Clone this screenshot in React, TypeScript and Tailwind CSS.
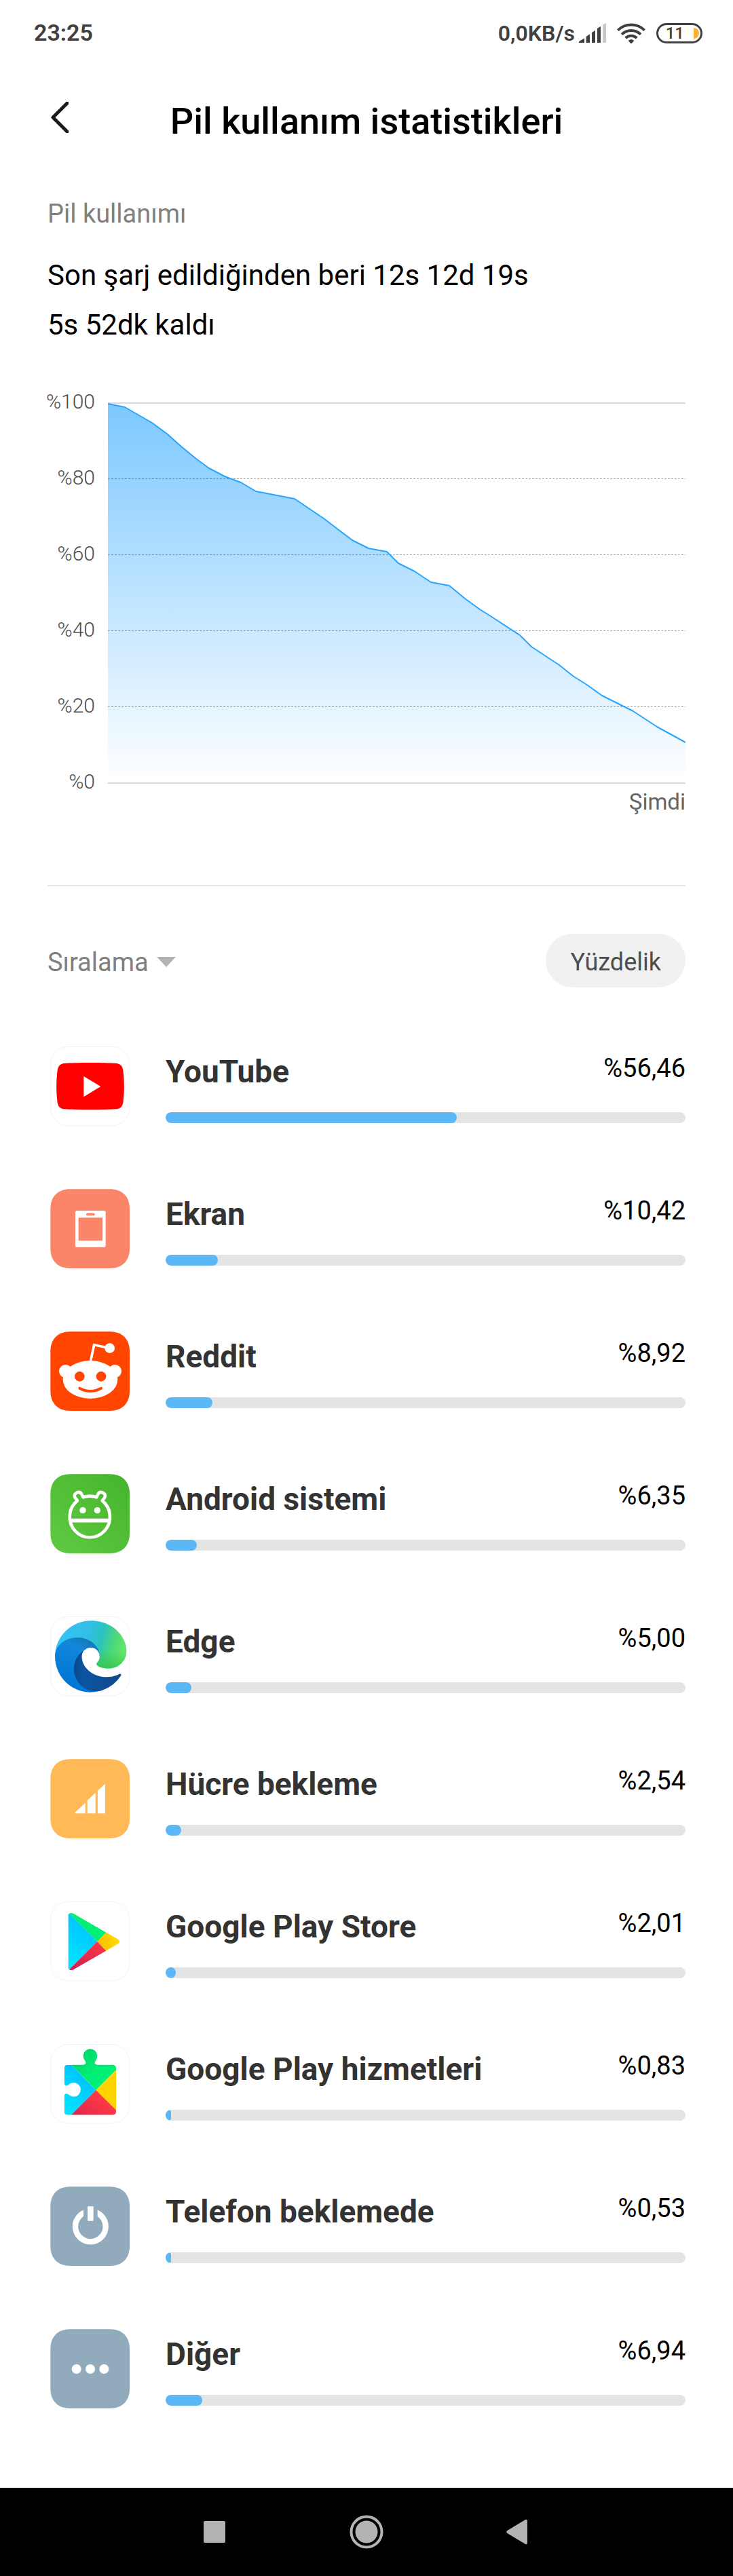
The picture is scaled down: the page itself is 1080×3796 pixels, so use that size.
import type { ReactNode } from "react";

type App = {
  name: string;
  value: string;
  percent: number;
  icon: ReactNode;
};

const SQUIRCLE =
  "M88 1H264C318 1 351 34 351 88V264C351 318 318 351 264 351H88C34 351 1 318 1 264V88C1 34 34 1 88 1Z";

/** Rounded app tile. White tiles get a hairline border. */
function Tile({ fill = "#fff", children }: { fill?: string; children: ReactNode }) {
  return (
    <svg viewBox="0 0 354 354" className="h-[118px] w-[118px] shrink-0" aria-hidden="true">
      <path
        d={SQUIRCLE}
        fill={fill}
        stroke={fill === "#fff" ? "#ebebeb" : "none"}
        strokeWidth={fill === "#fff" ? 2 : 0}
      />
      {children}
    </svg>
  );
}

function YouTubeIcon() {
  return (
    <Tile>
      <path
        fill="#f00"
        d="M60 75C120 71 234 71 294 75C312 78 319 88 322 106C328 150 328 204 322 248C319 264 312 274 294 277C234 281 120 281 60 277C42 274 35 264 32 248C26 204 26 150 32 106C35 88 42 78 60 75Z"
      />
      <path fill="#fff" d="M148 132L223 177L148 223Z" />
    </Tile>
  );
}

function ScreenIcon() {
  return (
    <Tile fill="#fb8568">
      <rect x="111" y="96" width="134" height="162" rx="7" fill="#fff" />
      <rect x="159" y="107" width="38" height="11" rx="5" fill="#fb8568" />
      <rect x="125" y="127" width="106" height="102" fill="#fb8568" />
    </Tile>
  );
}

function RedditIcon() {
  return (
    <Tile fill="#ff4500">
      <g fill="#fff">
        <circle cx="68" cy="176" r="29" />
        <circle cx="286" cy="176" r="29" />
        <ellipse cx="177" cy="213" rx="121" ry="84" />
        <circle cx="263" cy="74" r="22" />
      </g>
      <path d="M178 134L194 59L252 72" fill="none" stroke="#fff" strokeWidth="11" strokeLinejoin="round" />
      <g fill="#ff4500">
        <circle cx="130" cy="199" r="22" />
        <circle cx="225" cy="199" r="22" />
      </g>
      <path d="M130 251Q177 277 225 251" fill="none" stroke="#ff4500" strokeWidth="12" strokeLinecap="round" />
    </Tile>
  );
}

function AndroidIcon() {
  return (
    <Tile fill="url(#android-bg)">
      <defs>
        <linearGradient id="android-bg" x1="0" y1="1" x2="1" y2="0">
          <stop offset="0" stopColor="#60ca42" />
          <stop offset="1" stopColor="#45b42c" />
        </linearGradient>
      </defs>
      <path
        d="M146 103A90 90 0 0 1 204 103L211 90C215 81 223 79 232 83C241 87 246 94 241 104L230 118A89 91 0 1 1 120 118L109 104C104 94 109 87 118 83C127 79 135 81 139 90L146 103Z"
        fill="none"
        stroke="#fff"
        strokeWidth="14"
        strokeLinejoin="round"
      />
      <path d="M92 206H258" stroke="#fff" strokeWidth="17" />
      <circle cx="144" cy="161" r="14" fill="#fff" />
      <circle cx="208" cy="161" r="14" fill="#fff" />
    </Tile>
  );
}

function EdgeIcon() {
  return (
    <Tile>
      <defs>
        <linearGradient id="edge-dark" gradientUnits="userSpaceOnUse" x1="63" y1="177" x2="241" y2="177">
          <stop offset="0" stopColor="#0a4486" />
          <stop offset="0.25" stopColor="#0c54a0" />
          <stop offset="1" stopColor="#124a8b" />
        </linearGradient>
        <linearGradient id="edge-blue" gradientUnits="userSpaceOnUse" x1="145" y1="70" x2="50" y2="230">
          <stop offset="0" stopColor="#1673ae" />
          <stop offset="0.3" stopColor="#1287dc" />
          <stop offset="1" stopColor="#0076d6" />
        </linearGradient>
        <linearGradient id="edge-green" gradientUnits="userSpaceOnUse" x1="40" y1="70" x2="240" y2="130">
          <stop offset="0" stopColor="#35c1f1" />
          <stop offset="0.35" stopColor="#31bfe6" />
          <stop offset="0.6" stopColor="#2bc3c0" />
          <stop offset="0.8" stopColor="#4ad67f" />
          <stop offset="1" stopColor="#60e56a" />
        </linearGradient>
        <linearGradient id="edge-shade" gradientUnits="userSpaceOnUse" x1="200" y1="110" x2="190" y2="176">
          <stop offset="0" stopColor="#36c752" stopOpacity="0" />
          <stop offset="1" stopColor="#36c752" />
        </linearGradient>
      </defs>
      <g transform="translate(21 19) scale(1.235) translate(-4.63 -4.92)">
        <path
          fill="url(#edge-dark)"
          d="M235.68 195.46a93.73 93.73 0 0 1-10.54 4.71 101.87 101.87 0 0 1-35.9 6.46c-47.32 0-88.54-32.55-88.54-74.32A31.48 31.48 0 0 1 117.13 105c-42.8 1.8-53.8 46.4-53.8 72.53 0 73.88 68.09 81.37 82.76 81.37 7.91 0 19.84-2.3 27-4.56l1.31-.44a128.34 128.34 0 0 0 66.6-52.8 4 4 0 0 0-5.32-5.64Z"
        />
        <path
          fill="url(#edge-blue)"
          d="M110.34 246.34A79.2 79.2 0 0 1 87.6 225a80.72 80.72 0 0 1 29.53-120c3.12-1.47 8.45-4.13 15.54-4a32.35 32.35 0 0 1 25.69 13 31.88 31.88 0 0 1 6.36 18.66c0-.21 24.46-79.6-80-79.6-43.9 0-80 41.66-80 78.21a130.15 130.15 0 0 0 12.11 56 128 128 0 0 0 156.38 67.11 75.55 75.55 0 0 1-62.78-8Z"
        />
        <path
          fill="url(#edge-green)"
          d="M156.94 153.78c-.81 1.05-3.3 2.5-3.3 5.66 0 2.61 1.7 5.12 4.72 7.23 14.38 10 41.49 8.68 41.56 8.68a59.56 59.56 0 0 0 30.27-8.35 61.38 61.38 0 0 0 30.43-52.88c.26-22.41-8-37.31-11.34-43.91C228.09 28.76 182.35 4.92 132.61 4.92a128 128 0 0 0-128 126.2c.48-36.54 36.8-66.05 80-66.05 3.5 0 23.46.34 42 10.07 16.34 8.58 24.9 18.94 30.85 29.21 6.18 10.67 7.28 24.15 7.28 29.52 0 5.37-2.74 13.33-7.8 19.91Z"
        />
        <path
          fill="url(#edge-shade)"
          d="M156.94 153.78c-.81 1.05-3.3 2.5-3.3 5.66 0 2.61 1.7 5.12 4.72 7.23 14.38 10 41.49 8.68 41.56 8.68a59.56 59.56 0 0 0 30.27-8.35 61.38 61.38 0 0 0 30.43-52.88L164 110c1 8 .7 18 .7 23.87 0 5.37-2.74 13.33-7.8 19.91Z"
        />
      </g>
    </Tile>
  );
}

function CellIcon() {
  return (
    <Tile fill="#ffb957">
      <g fill="#fff">
        <path d="M109 237L155 194V241H112Q109 241 109 237Z" />
        <path d="M164 183L200 150V241H164Z" />
        <path d="M210 140L243 110V241H210Z" />
      </g>
    </Tile>
  );
}

function PlayStoreIcon() {
  return (
    <Tile>
      <defs>
        <linearGradient id="play-blue" x1="0.6" y1="0" x2="0.2" y2="1">
          <stop offset="0" stopColor="#00bfff" />
          <stop offset="1" stopColor="#00e5ff" />
        </linearGradient>
        <linearGradient id="play-red" x1="1" y1="0" x2="0" y2="1">
          <stop offset="0" stopColor="#ff3a44" />
          <stop offset="1" stopColor="#c8204f" />
        </linearGradient>
        <linearGradient id="play-yellow" x1="0" y1="0" x2="1" y2="0">
          <stop offset="0" stopColor="#ffbd00" />
          <stop offset="1" stopColor="#ffdd00" />
        </linearGradient>
      </defs>
      <path fill="url(#play-blue)" d="M84 53L208 177L84 301Q80 299 80 293V61Q80 55 84 53Z" />
      <path fill="#00f076" d="M84 54Q92 48 103 54L247 137L208 177Z" />
      <path fill="url(#play-yellow)" d="M247 137L300 167Q314 177 300 187L247 218L208 177Z" />
      <path fill="url(#play-red)" d="M208 177L247 218L103 301Q92 307 84 301Z" />
    </Tile>
  );
}

function PlayServicesIcon() {
  return (
    <Tile>
      <defs>
        <clipPath id="puzzle">
          <path d="M78 92H145Q158 91 157 82Q156 77 152 71A31 31 0 1 1 202 71Q198 77 197 82Q196 91 209 92H275Q291 92 291 108V298Q291 314 275 314H78Q62 314 62 298V229Q63 220 72 220Q79 221 84 226A31 31 0 1 0 84 178Q79 183 72 184Q63 183 62 174V108Q62 92 78 92Z" />
        </clipPath>
        <linearGradient id="puzzle-blue" x1="1" y1="0" x2="0.4" y2="1">
          <stop offset="0" stopColor="#00b8ff" />
          <stop offset="1" stopColor="#00e3ff" />
        </linearGradient>
        <linearGradient id="puzzle-green" x1="0" y1="0" x2="0.5" y2="0.6">
          <stop offset="0.3" stopColor="#04d568" />
          <stop offset="1" stopColor="#00f076" />
        </linearGradient>
        <linearGradient id="puzzle-red" x1="1" y1="0.3" x2="0" y2="1">
          <stop offset="0.2" stopColor="#ff3a44" />
          <stop offset="1" stopColor="#dc2450" />
        </linearGradient>
      </defs>
      <g clipPath="url(#puzzle)">
        <path fill="url(#puzzle-blue)" d="M40 92H94L202 204L92 314H40Z" />
        <path fill="url(#puzzle-green)" d="M94 92V10H291V115L202 204Z" />
        <path fill="#ffd400" d="M291 115V292L202 204Z" />
        <path fill="url(#puzzle-red)" d="M202 204L291 292V314H92Z" />
      </g>
    </Tile>
  );
}

function PowerIcon() {
  return (
    <Tile fill="#91abbd">
      <circle cx="178" cy="177" r="67" fill="none" stroke="#fff" strokeWidth="25" />
      <rect x="147" y="80" width="62" height="75" fill="#91abbd" />
      <rect x="165" y="88" width="26" height="64" rx="3" fill="#fff" />
    </Tile>
  );
}

function OtherIcon() {
  return (
    <Tile fill="#91abbd">
      <g fill="#fff">
        <circle cx="116" cy="177" r="21" />
        <circle cx="177" cy="177" r="21" />
        <circle cx="238" cy="177" r="21" />
      </g>
    </Tile>
  );
}

const APPS: App[] = [
  { name: "YouTube", value: "%56,46", percent: 56, icon: <YouTubeIcon /> },
  { name: "Ekran", value: "%10,42", percent: 10, icon: <ScreenIcon /> },
  { name: "Reddit", value: "%8,92", percent: 9, icon: <RedditIcon /> },
  { name: "Android sistemi", value: "%6,35", percent: 6, icon: <AndroidIcon /> },
  { name: "Edge", value: "%5,00", percent: 5, icon: <EdgeIcon /> },
  { name: "Hücre bekleme", value: "%2,54", percent: 3, icon: <CellIcon /> },
  { name: "Google Play Store", value: "%2,01", percent: 2, icon: <PlayStoreIcon /> },
  { name: "Google Play hizmetleri", value: "%0,83", percent: 1, icon: <PlayServicesIcon /> },
  { name: "Telefon beklemede", value: "%0,53", percent: 1, icon: <PowerIcon /> },
  { name: "Diğer", value: "%6,94", percent: 7, icon: <OtherIcon /> },
];

function StatusBar() {
  return (
    <div className="flex h-[97px] items-center justify-between pr-[45px] pl-[50px] text-[#404040]">
      <span className="text-[34px] font-semibold">23:25</span>
      <div className="flex items-center">
        <span className="text-[32px] font-semibold">0,0KB/s</span>
        <svg viewBox="0 0 120 87" className="ml-[6px] h-[29px] w-10" fill="#404040" aria-hidden="true">
          <path d="M0 82L24 67V87H0Z" />
          <path d="M32 60L48 49V87H32Z" />
          <path d="M57 42L72 32V87H57Z" />
          <path d="M81 24L96 14V87H81Z" />
          <path d="M105 7L120 0V87H105Z" fill="#c8c8c8" />
        </svg>
        <svg viewBox="0 0 126 90" className="ml-4 h-[30px] w-[42px]" aria-hidden="true">
          <g fill="none" stroke="#404040" strokeWidth="12">
            <path d="M4 32A84 84 0 0 1 122 32" />
            <path d="M21 50A60 60 0 0 1 105 50" />
            <path d="M38 66A36 36 0 0 1 88 66" />
          </g>
          <path d="M50 78Q63 66 76 78L66 89Q63 91 60 89Z" fill="#404040" />
        </svg>
        <div className="ml-4 flex h-[30px] w-[68px] items-center justify-end gap-[14px] rounded-full border-[3px] border-[#404040] pr-[2px]">
          <span className="text-2xl leading-6 font-medium">11</span>
          <span className="h-4 w-2 rounded-r-full bg-[#f9b033]" />
        </div>
      </div>
    </div>
  );
}

function Header() {
  return (
    <header className="grid h-[162px] grid-cols-[56px_1fr_56px] items-center px-[60px]">
      <button type="button" aria-label="Geri" className="flex h-14 w-14 justify-center">
        <svg viewBox="0 0 26 46" className="h-[46px] w-[26px]" aria-hidden="true">
          <path
            d="M24 2L3 23L24 44"
            fill="none"
            stroke="#1a1a1a"
            strokeWidth="5"
            strokeLinecap="round"
            strokeLinejoin="round"
          />
        </svg>
      </button>
      <h1 className="text-center text-[54px] font-medium text-black">Pil kullanım istatistikleri</h1>
    </header>
  );
}

const LEVELS = ["%100", "%80", "%60", "%40", "%20", "%0"];

const CURVE =
  "0,2 25,7 65,30 88,47 108,65 130,83 149,97 172,109 196,118 218,131 275,142 318,171 360,203 384,215 411,220 428,237 452,249 476,265 503,270 526,289 548,305 564,315 607,343 624,360 665,387 685,403 707,417 728,432 750,443 774,455 809,478 831,490 851,501";

function BatteryChart() {
  return (
    <div className="mt-[62px] text-[#666]">
      <div className="flex items-start gap-[19px]">
        <div className="flex h-[590px] w-[70px] flex-col items-end justify-between text-[30px] leading-[30px] font-light text-[#4d4d4d]">
          {LEVELS.map((level) => (
            <span key={level}>{level}</span>
          ))}
        </div>
        <svg
          viewBox="0 0 851 562"
          preserveAspectRatio="none"
          className="mt-4 h-[562px] min-w-0 flex-1"
          role="img"
          aria-label="Pil seviyesi"
        >
          <defs>
            <linearGradient id="level" x1="0" y1="0" x2="0" y2="1">
              <stop offset="0" stopColor="#7cc8ff" />
              <stop offset="1" stopColor="#ffffff" />
            </linearGradient>
          </defs>
          <path d="M0 1H851M0 561H851" stroke="#d9d9d9" strokeWidth="2" />
          <polygon points={`${CURVE} 851,560 0,560`} fill="url(#level)" />
          <path
            d="M0 112.5H851M0 224.5H851M0 336.5H851M0 448.5H851"
            stroke="#000"
            strokeOpacity="0.35"
            strokeDasharray="3 2"
          />
          <polyline points={CURVE} fill="none" stroke="#29a5ff" strokeWidth="2" strokeLinejoin="round" />
        </svg>
      </div>
      <p className="pb-[2px] text-right text-[33px] leading-[30px]">Şimdi</p>
    </div>
  );
}

function SortRow() {
  return (
    <div className="mt-[70px] flex items-center justify-between">
      <div className="flex items-center gap-3 pt-1">
        <select aria-label="Sıralama" className="appearance-none bg-transparent text-[38px] leading-[48px] text-[#808080]">
          <option>Sıralama</option>
        </select>
        <svg viewBox="0 0 28 15" className="h-[15px] w-7" aria-hidden="true">
          <path d="M0 0H28L14 15Z" fill="#b3b3b3" />
        </svg>
      </div>
      <button
        type="button"
        className="h-[79px] rounded-full bg-[#f1f1f1] px-9 pt-1 text-[36px] leading-[48px] text-[#4d4d4d]"
      >
        Yüzdelik
      </button>
    </div>
  );
}

function AppRow({ app }: { app: App }) {
  return (
    <li className="flex gap-[52px]">
      {app.icon}
      <div className="min-w-0 flex-1 pt-[10px]">
        <div className="flex items-start justify-between">
          <span className="text-[46px] leading-[54px] font-bold text-[#333]">{app.name}</span>
          <span className="text-[38px] leading-[44px] text-black">{app.value}</span>
        </div>
        <div className="mt-[33px] h-4 overflow-hidden rounded-full bg-[#e4e4e4]">
          <div className="h-full rounded-full bg-[#5cb7f6]" style={{ width: `${app.percent}%` }} />
        </div>
      </div>
    </li>
  );
}

function NavBar() {
  return (
    <nav className="flex h-[130px] items-center justify-center gap-[168px] bg-black">
      <button type="button" aria-label="Son uygulamalar" className="flex h-14 w-14 items-center justify-center">
        <span className="h-8 w-8 rounded-xs bg-[#b3b3b3]" />
      </button>
      <button type="button" aria-label="Ana ekran" className="flex h-14 w-14 items-center justify-center">
        <svg viewBox="0 0 50 50" className="h-[50px] w-[50px]" aria-hidden="true">
          <circle cx="25" cy="25" r="22.5" fill="none" stroke="#b3b3b3" strokeWidth="4" />
          <circle cx="25" cy="25" r="16.5" fill="#b3b3b3" />
        </svg>
      </button>
      <button type="button" aria-label="Geri" className="flex h-14 w-14 items-center justify-center">
        <svg viewBox="0 0 36 38" className="h-[38px] w-9" aria-hidden="true">
          <path d="M1.5 17L28 1Q31 0 31 3V35Q31 38 28 37L1.5 21Q-1 19 1.5 17Z" fill="#b3b3b3" />
        </svg>
      </button>
    </nav>
  );
}

export default function App() {
  return (
    <div className="flex min-h-screen flex-col bg-white font-[Roboto,sans-serif]">
      <StatusBar />
      <Header />
      <main className="flex-1 px-[70px] pt-8 pb-[116px]">
        <h2 className="text-[38px] leading-[48px] text-[#808080]">Pil kullanımı</h2>
        <div className="mt-[30px] text-[42px] leading-[73px] text-black">
          <p>Son şarj edildiğinden beri 12s 12d 19s</p>
          <p>5s 52dk kaldı</p>
        </div>
        <BatteryChart />
        <hr className="mt-[105px] border-t-2 border-[#e5e5e5]" />
        <SortRow />
        <ul className="mt-[87px] flex flex-col gap-[92px] pl-1">
          {APPS.map((app) => (
            <AppRow key={app.name} app={app} />
          ))}
        </ul>
      </main>
      <NavBar />
    </div>
  );
}
